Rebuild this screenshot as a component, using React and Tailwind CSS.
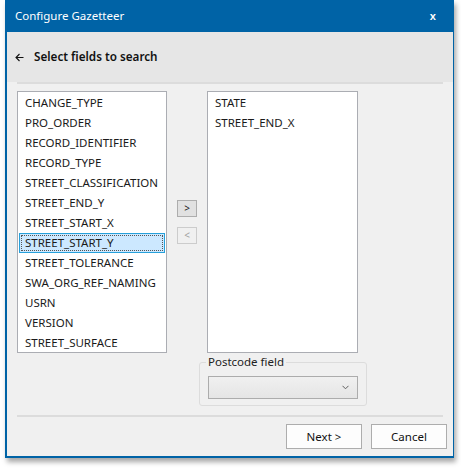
import React from "react";

const FONT = { fontFamily: '"Noto Sans", "Open Sans", sans-serif' };

const leftFields = [
  "CHANGE_TYPE",
  "PRO_ORDER",
  "RECORD_IDENTIFIER",
  "RECORD_TYPE",
  "STREET_CLASSIFICATION",
  "STREET_END_Y",
  "STREET_START_X",
  "STREET_START_Y",
  "STREET_TOLERANCE",
  "SWA_ORG_REF_NAMING",
  "USRN",
  "VERSION",
  "STREET_SURFACE",
];

const rightFields = ["STATE", "STREET_END_X"];

const ListBox = ({ items, selected, className }) => (
  <div className={`bg-white border border-[#abadb3] pt-[1px] px-[1px] ${className || ""}`}>
    {items.map((item) => (
      <div
        key={item}
        className={
          item === selected
            ? "h-5 flex items-center px-[5px] bg-[#cce8ff] border border-[#26a0da] outline outline-1 outline-dotted outline-offset-[-3px] outline-[#555] text-[11.5px] text-[#1a1a1a]"
            : "h-5 flex items-center px-[6px] text-[11.5px] text-[#1a1a1a]"
        }
      >
        {item}
      </div>
    ))}
  </div>
);

export default function App() {
  return (
    <div className="w-[461px] h-[470px] bg-white relative" style={FONT}>
      <div className="ml-[5px] w-[449px] h-[458px] bg-[#0063a6] pl-[2px] pr-[1px] pb-[2px] flex flex-col shadow-[2px_4px_5px_rgba(0,0,0,0.35)]">
        {/* title bar */}
        <div className="h-8 flex items-center justify-between pl-[8px] pr-[17px] text-white text-[11.5px] shrink-0">
          <span>Configure Gazetteer</span>
          <span className="text-[11px] font-semibold">x</span>
        </div>

        {/* header */}
        <div className="h-[50px] bg-[#e6e6e6] flex items-center pl-[8px] shrink-0">
          <svg width="9" height="9" viewBox="0 0 9 9" className="mr-[10px]">
            <path d="M8.5 4.5 H1 M4.5 1 L1 4.5 L4.5 8" fill="none" stroke="#111" strokeWidth="1.1" />
          </svg>
          <span className="text-[11.7px] font-semibold text-[#111]">Select fields to search</span>
        </div>

        {/* body */}
        <div className="flex-1 bg-[#f0f0f0] flex flex-col">
          <div className="mx-[10px] h-[2px] bg-[#dcdcdc]" />

          <div className="flex mt-[7px] ml-[10px]">
            <ListBox items={leftFields} selected="STREET_START_Y" className="w-[150px] h-[262px]" />

            <div className="w-[40px] flex flex-col items-center pt-[109px] gap-[10px]">
              <div className="w-[20px] h-[17px] bg-[#e1e1e1] border border-[#adadad] flex items-center justify-center text-[10px] text-[#222]">
                &gt;
              </div>
              <div className="w-[20px] h-[17px] bg-[#f0f0f0] border border-[#cccccc] flex items-center justify-center text-[10px] text-[#a0a0a0]">
                &lt;
              </div>
            </div>

            <div className="flex flex-col">
              <ListBox items={rightFields} className="w-[151px] h-[262px]" />

              <div className="-ml-[8px] mt-[9px] w-[168px] h-[44px] border border-[#dcdcdc] rounded-[3px] relative">
                <span className="absolute -top-[9px] left-[6px] bg-[#f0f0f0] px-[2px] text-[11.5px] text-[#222] leading-4">
                  Postcode field
                </span>
                <div className="ml-[8px] mt-[13px] w-[150px] h-[23px] border border-[#acacac] bg-gradient-to-b from-[#f0f0f0] to-[#e5e5e5] flex items-center justify-end pr-[8px]">
                  <svg width="7" height="5" viewBox="0 0 7 5">
                    <path d="M0.5 0.8 L3.5 3.8 L6.5 0.8" fill="none" stroke="#606060" strokeWidth="1" />
                  </svg>
                </div>
              </div>
            </div>
          </div>

          <div className="mx-[10px] mt-[9px] h-[2px] bg-[#dcdcdc]" />

          <div className="flex justify-end gap-[9px] mt-[7px] pr-[6px]">
            <div className="w-[76px] h-[25px] bg-[#fdfdfd] border border-[#adadad] flex items-center justify-center text-[11.5px] text-[#111]">
              Next &gt;
            </div>
            <div className="w-[76px] h-[25px] bg-[#fdfdfd] border border-[#adadad] flex items-center justify-center text-[11.5px] text-[#111]">
              Cancel
            </div>
          </div>
        </div>
      </div>
    </div>
  );
}
